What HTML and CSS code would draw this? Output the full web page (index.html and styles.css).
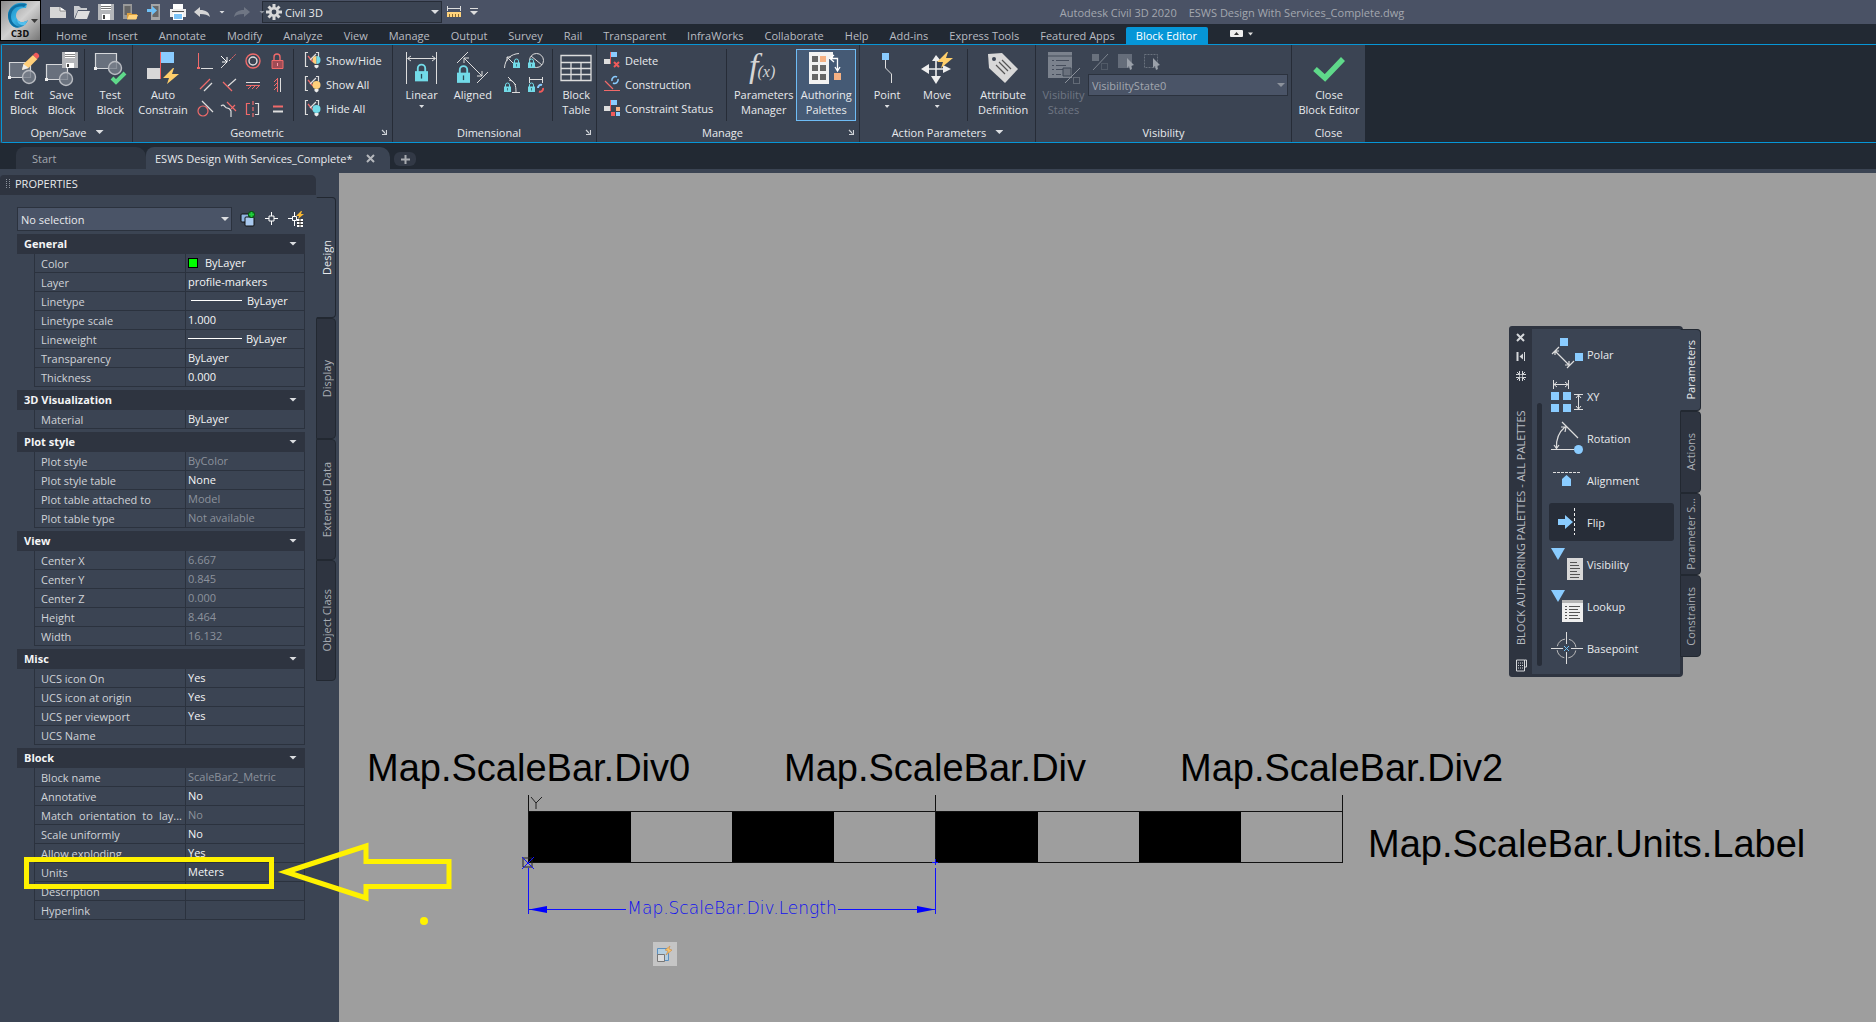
FILE: index.html
```html
<!DOCTYPE html>
<html lang="en">
<head>
<meta charset="utf-8">
<title>Autodesk Civil 3D 2020</title>
<link rel="stylesheet" href="styles.css">
</head>
<body>
<svg class="defs" aria-hidden="true">
  <defs>
    <symbol id="lock" viewBox="0 0 14 20"><path d="M3 9V5a4 4 0 0 1 8 0v4" fill="none" stroke="#72dbe8" stroke-width="2"/><path d="M0 8h14v11H0z" fill="#72dbe8"/><path d="M7 11v5" stroke="#2b4a55" stroke-width="1.4"/></symbol>
    <symbol id="constr" viewBox="0 0 18 18"><path d="M4 1.500H1.500v14H4M12 1.500h2.500v5" fill="none" stroke="#ddd" stroke-width="1.200"/><path d="M4 5l5 6" stroke="#f06a6a" stroke-width="1.200"/><path d="M6 9l6-6" stroke="#ddd" stroke-width="1.200"/><path d="M10.500 14h4v2l-2 1.500-2-1.500z" fill="#eee"/></symbol>
    <symbol id="launch" viewBox="0 0 6 6"><path d="M1 1l3.500 3.500M5.500 1v4.500H1" fill="none" stroke="#d0d3d8" stroke-width="1.200"/></symbol>
    <symbol id="bolt" viewBox="0 0 16 16"><path d="M10 0L0 10h6l-2 6L16 6H9l2-6z" fill="#ffcf6b"/></symbol>
    <symbol id="plan" viewBox="0 0 32 32"><path d="M1.500 1.500h21v15h-21z" fill="#68707d" stroke="#d5d7da" stroke-width="1.200"/><circle cx="21" cy="16" r="6.500" fill="#777e8a" fill-opacity=".8" stroke="#b9bcc2" stroke-width="1.400"/><path d="M0 15h3v3H0z" fill="#eee"/></symbol>
  </defs>
</svg>

<header class="app-head">
  <button class="logo" type="button" aria-label="Application menu">
    <svg width="39" height="39" viewBox="0 0 39 39"><defs><linearGradient id="cg" x1="0" x2="1" y2="1"><stop offset="0" stop-color="#1486ba"/><stop offset=".5" stop-color="#37b1e4"/><stop offset="1" stop-color="#1677ac"/></linearGradient></defs><path d="M26 3C16-1 7 6 7 14c0 9 6 15 13 12 3-1 6-4 7-7-4 3-9 3-11-1-3-5 1-12 9-11z" fill="url(#cg)"/><path d="M7 14c1-7 8-13 19-11l-3 3C15 4 10 9 10 16c0 5 4 9 9 10-7 2-12-4-12-12z" fill="#0d6fa3"/><path d="M16 18c2 4 7 4 11 1l-3 5c-4 1-8-1-8-6z" fill="#53c0ee"/><path d="M30 18h7l-3.500 4z" fill="#3a3a3a"/></svg>
    <span>C3D</span>
  </button>
  <div class="title-bar">
    <div class="quick">
      <button type="button" aria-label="New"><svg width="16" height="16"><path d="M0 3h10l6 4v7H0z" fill="#d6d6d6"/><path d="M10 3v4h6" fill="#fff" stroke="#777" stroke-width=".8"/></svg></button>
      <button type="button" aria-label="Open"><svg width="16" height="16"><path d="M0 15V2h5l2 2h6v2H4z" fill="#c9cbcf"/><path d="M4 7h12l-3 8H1z" fill="#dedede"/></svg></button>
      <button type="button" aria-label="Save"><svg width="16" height="16"><path d="M0 0h16v16H0z" fill="#b4b6ba"/><path d="M3 0h10v6H3zM4 10h8v6H4z" fill="#fff"/><path d="M3 2.500h10M3 4.500h10" stroke="#777"/><path d="M5 11h2v4H5z" fill="#444"/></svg></button>
      <button type="button" aria-label="Open from mobile"><svg width="16" height="16"><path d="M1 0h9v15H1z" fill="#9a9a9a"/><path d="M2.500 2h6v9h-6z" fill="#666"/><path d="M5 9h4l1 1h5v5H5z" fill="#d99d3e"/><path d="M7 11h9l-2 4.500H5z" fill="#ffd37c"/></svg></button>
      <button type="button" aria-label="Save to mobile"><svg width="16" height="16"><path d="M5 0h9v16H5z" fill="#a5a5a5"/><path d="M6.500 2h6v11h-6z" fill="#686868"/><path d="M1 5h5V2l5 4.500L6 11V8H1z" fill="#6fc0f5"/></svg></button>
      <button type="button" aria-label="Plot"><svg width="16" height="16"><path d="M3 0h10v5H3z" fill="#fff"/><path d="M0 5h16v8H0z" fill="#eee"/><path d="M2 7.500h12" stroke="#555"/><path d="M3 9h10v7H3z" fill="#fff"/><path d="M4 10h8v5H4z" fill="#7cc4f8"/></svg></button>
      <button type="button" aria-label="Undo"><svg width="16" height="16"><path d="M0 8l6-5v3c6 0 9 2 10 7-2-2-5-3-10-3v3z" fill="#d6d6d6"/></svg></button>
      <i class="caret small"></i>
      <button type="button" aria-label="Redo"><svg width="16" height="16"><path d="M16 8l-6-5v3C4 6 1 8 0 13c2-2 5-3 10-3v3z" fill="#6f7684"/></svg></button>
      <i class="caret small dim"></i>
    </div>
    <button class="workspace" type="button">
      <svg width="16" height="16" viewBox="0 0 16 16"><g stroke="#d8d8d8" stroke-width="3"><path d="M8 0v16M0 8h16M2.500 2.500l11 11M13.500 2.500l-11 11"/></g><circle cx="8" cy="8" r="5" fill="#d8d8d8"/><circle cx="8" cy="8" r="2.400" fill="#3b4453"/></svg>
      <span>Civil 3D</span><i class="caret"></i>
    </button>
    <svg class="ruler" width="14" height="12"><path d="M.5 0v5M13.500 0v5M1 2.500h12" stroke="#ddd"/><path d="M0 6h14v5H0z" fill="#ffd37c"/><path d="M2.500 8v3M5.500 8v3M8.500 8v3M11.500 8v3" stroke="#8a6a30"/></svg>
    <svg class="more" width="8" height="8"><path d="M0 .5h8" stroke="#ddd"/><path d="M0 3h8L4 7z" fill="#ddd"/></svg>
    <div class="app-title"><span>Autodesk Civil 3D 2020</span><span>ESWS Design With Services_Complete.dwg</span></div>
  </div>
  <nav class="tabs">
    <a href="#">Home</a><a href="#">Insert</a><a href="#">Annotate</a><a href="#">Modify</a><a href="#">Analyze</a><a href="#">View</a><a href="#">Manage</a><a href="#">Output</a><a href="#">Survey</a><a href="#">Rail</a><a href="#">Transparent</a><a href="#">InfraWorks</a><a href="#">Collaborate</a><a href="#">Help</a><a href="#">Add-ins</a><a href="#">Express Tools</a><a href="#">Featured Apps</a><a class="active" href="#">Block Editor</a>
    <button class="minimize" type="button" aria-label="Minimize ribbon"><svg width="24" height="8"><rect width="13" height="7" rx="1" fill="#eee"/><path d="M4 5l2.500-3L9 5z" fill="#333"/><path d="M18 2.500h5L20.500 5.500z" fill="#ddd"/></svg></button>
  </nav>
</header>

<div class="ribbon">
  <section class="panel p-open">
    <div class="tools">
      <button class="big w38" type="button"><svg width="32" height="32"><use href="#plan" y="9" width="32" height="32"/><path d="M14 18l1.500-6L25 3l4.500 4-9 9z" fill="#ffcf7a"/><path d="M14 18l1.500-6 5 4z" fill="#eee"/><path d="M25 3l2-2c2-1 5 2 4 4l-2 2z" fill="#f05a5a"/></svg><span>Edit<br>Block</span></button>
      <button class="big w38" type="button"><svg width="34" height="32"><use href="#plan" y="11" width="32" height="32"/><path d="M17 0h16v16H17z" fill="#b4b6ba"/><path d="M20 0h10v6H20zM21 11h8v5h-8z" fill="#fff"/><path d="M20 2.500h10M20 4.500h10" stroke="#888"/><path d="M22 12h2v3h-2z" fill="#444"/></svg><span>Save<br>Block</span></button>
      <i class="sep"></i>
      <button class="big w38" type="button"><svg width="32" height="32"><use href="#plan" width="32" height="32"/><path d="M18 26l4 4 9-9" fill="none" stroke="#5fd98a" stroke-width="4"/></svg><span>Test<br>Block</span></button>
    </div>
    <button class="panel-title" type="button">Open/Save <i class="caret"></i></button>
  </section>

  <section class="panel p-geo">
    <div class="tools">
      <button class="big w54" type="button"><svg width="32" height="32"><path d="M14 0h13v11H14z" fill="#8accff"/><path d="M0 16h13v11H0z" fill="#d8d8d8"/><path d="M13.500 0v27" stroke="#f05a5a"/><use href="#bolt" x="16" y="16" width="16" height="16"/></svg><span>Auto<br>Constrain</span></button>
      <div class="grid4">
        <button type="button" aria-label="Coincident"><svg width="16" height="16"><path d="M1.500 0v14" stroke="#f06a6a"/><path d="M0 14h3v2H0z" fill="#f06a6a"/><path d="M4 15.500h12" stroke="#ddd"/></svg></button>
        <button type="button" aria-label="Collinear"><svg width="16" height="16"><path d="M0 15L6 9M8 8l2-2" stroke="#ddd"/><path d="M9 7l6-6" stroke="#f06a6a" stroke-dasharray="2 1"/><path d="M0 3l6 6M6 4v5H1" fill="none" stroke="#fff"/></svg></button>
        <button type="button" aria-label="Concentric"><svg width="16" height="16"><circle cx="8" cy="8" r="7" fill="none" stroke="#f06a6a" stroke-width="1.400"/><circle cx="8" cy="8" r="4" fill="none" stroke="#ddd" stroke-width="1.400"/></svg></button>
        <button type="button" aria-label="Fix"><svg width="16" height="16"><path d="M5 8V4a3 3 0 0 1 6 0v4" fill="none" stroke="#f06a6a" stroke-width="1.400"/><path d="M3 7.500h11v8H3z" fill="#a04c55" stroke="#f06a6a"/><path d="M8.500 10v3" stroke="#f9a"/></svg></button>
        <button type="button" aria-label="Parallel"><svg width="16" height="16"><path d="M3 12L13 2" stroke="#f06a6a" stroke-width="1.200"/><path d="M7 14l8-8" stroke="#ddd" stroke-width="1.200"/></svg></button>
        <button type="button" aria-label="Perpendicular"><svg width="16" height="16"><path d="M2 5l9 9" stroke="#f06a6a" stroke-width="1.200"/><path d="M7 9l8-7" stroke="#ddd" stroke-width="1.200"/></svg></button>
        <button type="button" aria-label="Horizontal"><svg width="16" height="16"><path d="M1 5.500h14" stroke="#ddd"/><path d="M1 8.500h14M3 12l3-3M7 12l3-3M11 12l3-3" stroke="#f06a6a"/></svg></button>
        <button type="button" aria-label="Vertical"><svg width="16" height="16"><path d="M11.500 1v14" stroke="#ddd"/><path d="M8.500 1v14M5 5l3-3M5 9l3-3M5 13l3-3" stroke="#f06a6a"/></svg></button>
        <button type="button" aria-label="Tangent"><svg width="16" height="16"><circle cx="6" cy="10" r="5" fill="none" stroke="#f06a6a" stroke-width="1.200"/><path d="M5 0l11 11" stroke="#ddd" stroke-width="1.200"/></svg></button>
        <button type="button" aria-label="Smooth"><svg width="16" height="16"><path d="M0 5c3-3 4 2 6 2s3 1 4 3v6" fill="none" stroke="#ddd" stroke-width="1.200"/><path d="M6 1l9 9M10 8l4-4" stroke="#f06a6a" stroke-width="1.200"/></svg></button>
        <button type="button" aria-label="Symmetric"><svg width="16" height="16"><path d="M5 2.500H1.500v11H5M8 0v4M8 6v4M8 12v4" fill="none" stroke="#f06a6a" stroke-width="1.200"/><path d="M10 2.500h3.500v11H10" fill="none" stroke="#ddd" stroke-width="1.200"/></svg></button>
        <button type="button" aria-label="Equal"><svg width="16" height="16"><path d="M4 5.500h10" stroke="#f06a6a" stroke-width="2"/><path d="M4 10.500h10" stroke="#ddd" stroke-width="2"/></svg></button>
      </div>
      <i class="sep"></i>
      <div class="list">
        <button type="button"><svg width="18" height="18"><use href="#constr" width="18" height="18"/><path d="M12.500 5a4 4 0 0 0 0 8z" fill="#ffcf7a"/><path d="M12.500 5a4 4 0 0 1 0 8z" fill="#72dbe8"/></svg>Show/Hide</button>
        <button type="button"><svg width="18" height="18"><use href="#constr" width="18" height="18"/><circle cx="12.500" cy="10" r="4" fill="#ffcf7a"/></svg>Show All</button>
        <button type="button"><svg width="18" height="18"><use href="#constr" width="18" height="18"/><circle cx="12.500" cy="10" r="4" fill="#72dbe8"/></svg>Hide All</button>
      </div>
    </div>
    <div class="panel-title launch">Geometric<button type="button" aria-label="Constraint settings"><svg width="6" height="6"><use href="#launch"/></svg></button></div>
  </section>

  <section class="panel p-dim">
    <div class="tools">
      <button class="big w50" type="button"><svg width="32" height="32"><path d="M.5 0v32M30.500 0v32M2 6.500h27M5 4L1.500 6.500 5 9M26 4l3.500 2.500L26 9" fill="none" stroke="#ddd"/><use href="#lock" x="9" y="11" width="13" height="20"/></svg><span>Linear</span><i class="caret tiny"></i></button>
      <button class="big w50" type="button"><svg width="32" height="32"><path d="M0 11L11 0M20 31l11-11M7 6l18 18M7 11V6h5M25 19v5h-5" fill="none" stroke="#ddd"/><use href="#lock" x="0" y="13" width="13" height="19"/></svg><span>Aligned</span></button>
      <div class="grid2">
        <button type="button" aria-label="Radius"><svg width="16" height="16"><path d="M.5 15C1 6 7 1 15 .5M3 4l7 7M3 8V4h4" fill="none" stroke="#ddd"/><use href="#lock" x="9" y="5" width="7" height="11"/></svg></button>
        <button type="button" aria-label="Diameter"><svg width="16" height="16"><circle cx="8.500" cy="7.500" r="7" fill="none" stroke="#ddd"/><path d="M3 3l11 9" stroke="#ddd"/><use href="#lock" x="0" y="5" width="7" height="11"/></svg></button>
        <button type="button" aria-label="Angular"><svg width="16" height="16"><path d="M5 3c6 1 7 6 7 12M8 15.500h8M4 0l8 8" fill="none" stroke="#ddd"/><use href="#lock" x="0" y="5" width="7" height="11"/></svg></button>
        <button type="button" aria-label="Convert"><svg width="16" height="16"><path d="M1.500 0v6M14.500 0v6M2 2.500h12" stroke="#ddd"/><use href="#lock" x="0" y="5" width="7" height="11"/><path d="M10 11a3 3 0 0 1 4-3" fill="none" stroke="#8accff" stroke-width="2"/><path d="M11 14.500a3 3 0 0 0 4-3.500" fill="none" stroke="#f05a5a" stroke-width="2"/></svg></button>
      </div>
      <i class="sep"></i>
      <button class="big w40" type="button"><svg width="32" height="32"><path d="M1 3.500h30v25H1zM1 10.500h30M1 16.500h30M1 22.500h30M11 10v18M21 10v18" fill="none" stroke="#ddd" stroke-width="1.300"/></svg><span>Block<br>Table</span></button>
    </div>
    <div class="panel-title launch">Dimensional<button type="button" aria-label="Dimensional settings"><svg width="6" height="6"><use href="#launch"/></svg></button></div>
  </section>

  <section class="panel p-manage">
    <div class="tools">
      <div class="list wide">
        <button type="button"><svg width="16" height="18"><path d="M7 1h6v5H7z" fill="#8accff"/><path d="M0 8h6v5H0z" fill="#ddd"/><path d="M6.500 1v12" stroke="#f05a5a"/><path d="M10 11l5 5M15 11l-5 5" stroke="#f05a5a" stroke-width="2"/></svg>Delete</button>
        <button type="button"><svg width="16" height="18"><path d="M0 15.500h16M1 6l8 8" stroke="#f06a6a" stroke-width="1.200"/><path d="M8 6a3.500 3.500 0 0 1 5-4" fill="none" stroke="#8accff" stroke-width="1.600"/><path d="M9 8a3.500 3.500 0 0 0 5-4" fill="none" stroke="#8accff" stroke-width="1.600"/></svg>Construction</button>
        <button type="button"><svg width="16" height="18"><path d="M7 1h6v5H7zM12 13h4v4h-4z" fill="#8accff"/><path d="M0 7h6v5H0z" fill="#ddd"/><path d="M6.500 1v11" stroke="#f05a5a"/><path d="M7 13h4v4H7z" fill="#f05a5a"/><path d="M12 8h4v4h-4z" fill="#f5b183"/></svg>Constraint Status</button>
      </div>
      <i class="sep"></i>
      <button class="big w66" type="button"><svg width="34" height="32"><text class="fx" x="2" y="25">f<tspan class="fx-arg" dx="-1">(x)</tspan></text></svg><span>Parameters<br>Manager</span></button>
      <button class="big w60 on" type="button"><svg width="34" height="32"><path d="M0 0h24v7h-4v25H0z" fill="#f2f2f2"/><path d="M3 4h6v6H3zM3 13h6v6H3zM11 13h6v6h-6zM3 22h6v6H3zM11 22h6v6h-6z" fill="#666"/><path d="M11 4h6v6h-6zM25 21h7v7h-7z" fill="#f5b183"/><path d="M22 6.500h6.500V18M26 15l2.500 4 2.500-4M25 3l-4 3.500 4 3.500" fill="none" stroke="#fff" stroke-width="1.300"/></svg><span>Authoring<br>Palettes</span></button>
    </div>
    <div class="panel-title launch">Manage<button type="button" aria-label="Block editor settings"><svg width="6" height="6"><use href="#launch"/></svg></button></div>
  </section>

  <section class="panel p-action">
    <div class="tools">
      <button class="big w50" type="button"><svg width="32" height="32"><path d="M11 1h7v7h-7z" fill="#8accff"/><path d="M14.500 8v8l6 6v9" fill="none" stroke="#ddd"/></svg><span>Point</span><i class="caret tiny"></i></button>
      <button class="big w50" type="button"><svg width="32" height="32"><path d="M15 5v24M3 17h24" stroke="#eee" stroke-width="1.600"/><path d="M0 17l8-5v10zM15 32l-5-8h10zM15 3l5 6H11zM30 17l-8-4v8z" fill="#eee"/><use href="#bolt" x="16" y="0" width="16" height="16"/></svg><span>Move</span><i class="caret tiny"></i></button>
      <i class="sep"></i>
      <button class="big w60" type="button"><svg width="32" height="32"><path d="M1 2l14-1 16 16-13 14L2 16z" fill="#d8d8d8"/><circle cx="7" cy="7" r="2" fill="#3b4453"/><path d="M9 13l9 9M12 10l9 9M15 8l9 9" stroke="#555" stroke-width="1.200"/></svg><span>Attribute<br>Definition</span></button>
    </div>
    <button class="panel-title" type="button">Action Parameters <i class="caret"></i></button>
  </section>

  <section class="panel p-vis">
    <div class="tools">
      <button class="big w50" type="button" disabled><svg width="32" height="32"><path d="M0 0h24v26H0z" fill="#7b828d"/><path d="M0 4h24M4 8.500h2M8 8.500h13M4 13.500h2M8 13.500h10M4 17.500h2M8 17.500h8M4 22.500h2M8 22.500h5" stroke="#454d5b" stroke-width="1.200"/><path d="M15 16h8v8h-8z" fill="#6a717d" stroke="#3b4453"/><path d="M17 31l15-15" stroke="#8b919b"/><path d="M25.500 25.500h6v6h-6z" fill="none" stroke="#8b919b" stroke-dasharray="1 1"/></svg><span>Visibility<br>States</span></button>
      <div class="vis-side">
        <div class="vis-icons">
          <button type="button" disabled aria-label="Visibility mode"><svg width="16" height="16"><path d="M0 0h7v7H0z" fill="#69717d"/><path d="M1 16L16 0" stroke="#7d848f"/><path d="M9.500 9.500h6v6h-6z" fill="none" stroke="#69717d" stroke-dasharray="1 1"/></svg></button>
          <button type="button" disabled aria-label="Make visible"><svg width="16" height="16"><path d="M0 0h14v14H0z" fill="#656d7a"/><path d="M9 4l7 7-3 1 1 3-2 1-1-4-2 2z" fill="#9aa0a9"/></svg></button>
          <button type="button" disabled aria-label="Make invisible"><svg width="16" height="16"><path d="M.5.5h13v13H.5z" fill="none" stroke="#69717d" stroke-dasharray="2 1"/><path d="M9 4l7 7-3 1 1 3-2 1-1-4-2 2z" fill="#9aa0a9"/></svg></button>
        </div>
        <div class="select-wrap"><select aria-label="Visibility state" disabled><option>VisibilityState0</option></select><i class="caret dim"></i></div>
      </div>
    </div>
    <div class="panel-title">Visibility</div>
  </section>

  <section class="panel p-close">
    <div class="tools">
      <button class="big w66" type="button"><svg width="32" height="32"><path d="M2 17l10 9L30 7" fill="none" stroke="#5fd98a" stroke-width="5.500"/></svg><span>Close<br>Block Editor</span></button>
    </div>
    <div class="panel-title">Close</div>
  </section>
</div>

<nav class="doc-tabs">
  <a class="doc-tab start" href="#"><span>Start</span></a>
  <a class="doc-tab current" href="#"><span>ESWS Design With Services_Complete*</span><svg width="9" height="9"><path d="M1 1l7 7M8 1L1 8" stroke="#b5b8bd" stroke-width="2"/></svg></a>
  <button class="doc-add" type="button" aria-label="New drawing"><svg width="9" height="9"><path d="M4.500 0v9M0 4.500h9" stroke="#a8abb0" stroke-width="2"/></svg></button>
</nav>

<main class="work">
  <aside class="props">
    <div class="props-head"><svg width="4" height="10"><path d="M.5 0v10M3.500 0v10" stroke="#8c929c" stroke-dasharray="1 1"/></svg>PROPERTIES</div>
    <div class="props-cols">
      <div class="props-body">
        <div class="picker">
          <div class="select-wrap"><select aria-label="Selection"><option>No selection</option></select><i class="caret"></i></div>
          <button type="button" aria-label="Toggle pickadd"><svg width="16" height="16"><rect x="1" y="3" width="8" height="8" rx="1" fill="#8fb4e0" stroke="#111"/><rect x="5" y="6" width="9" height="9" rx="1" fill="#a9c9ef" stroke="#111"/><path d="M11.500 0v7M8 3.500h7" stroke="#0b5b16" stroke-width="4"/><path d="M11.500 1v5M9 3.500h5" stroke="#1fd03c" stroke-width="2"/></svg></button>
          <button type="button" aria-label="Select objects"><svg width="16" height="16"><path d="M7.500 1v4M7.500 10v4M1 7.500h4M10 7.500h4" stroke="#fff"/><path d="M5 5h5v5H5z" fill="none" stroke="#fff"/></svg></button>
          <button type="button" aria-label="Quick select"><svg width="16" height="16"><path d="M6.500 1v4M6.500 10v5M0 7.500h4M4.500 5.500h4v4h-4z" fill="none" stroke="#fff"/><path d="M13 0L8 5h3l-1 3 6-5h-3l1-3z" fill="#f7b731"/><path d="M9 8h6v8H9z" fill="#fff"/><path d="M9 10.500h6M9 13.500h6M12 8v8" stroke="#333"/></svg></button>
        </div>
        <section><button class="cat" type="button">General<i class="caret"></i></button>
          <table>
            <tr><th>Color</th><td><i class="swatch"></i>ByLayer</td></tr>
            <tr><th>Layer</th><td>profile-markers</td></tr>
            <tr><th>Linetype</th><td><i class="line short"></i>ByLayer</td></tr>
            <tr><th>Linetype scale</th><td>1.000</td></tr>
            <tr><th>Lineweight</th><td><i class="line"></i>ByLayer</td></tr>
            <tr><th>Transparency</th><td>ByLayer</td></tr>
            <tr><th>Thickness</th><td>0.000</td></tr>
          </table></section>
        <section><button class="cat" type="button">3D Visualization<i class="caret"></i></button>
          <table><tr><th>Material</th><td>ByLayer</td></tr></table></section>
        <section><button class="cat" type="button">Plot style<i class="caret"></i></button>
          <table>
            <tr><th>Plot style</th><td class="ro">ByColor</td></tr>
            <tr><th>Plot style table</th><td>None</td></tr>
            <tr><th>Plot table attached to</th><td class="ro">Model</td></tr>
            <tr><th>Plot table type</th><td class="ro">Not available</td></tr>
          </table></section>
        <section><button class="cat" type="button">View<i class="caret"></i></button>
          <table>
            <tr><th>Center X</th><td class="ro">6.667</td></tr>
            <tr><th>Center Y</th><td class="ro">0.845</td></tr>
            <tr><th>Center Z</th><td class="ro">0.000</td></tr>
            <tr><th>Height</th><td class="ro">8.464</td></tr>
            <tr><th>Width</th><td class="ro">16.132</td></tr>
          </table></section>
        <section><button class="cat" type="button">Misc<i class="caret"></i></button>
          <table>
            <tr><th>UCS icon On</th><td>Yes</td></tr>
            <tr><th>UCS icon at origin</th><td>Yes</td></tr>
            <tr><th>UCS per viewport</th><td>Yes</td></tr>
            <tr><th>UCS Name</th><td></td></tr>
          </table></section>
        <section><button class="cat" type="button">Block<i class="caret"></i></button>
          <table>
            <tr><th>Block name</th><td class="ro">ScaleBar2_Metric</td></tr>
            <tr><th>Annotative</th><td>No</td></tr>
            <tr><th class="justified">Match orientation to lay...</th><td class="ro">No</td></tr>
            <tr><th>Scale uniformly</th><td>No</td></tr>
            <tr><th>Allow exploding</th><td>Yes</td></tr>
            <tr><th>Units</th><td>Meters</td></tr>
            <tr><th>Description</th><td></td></tr>
            <tr><th>Hyperlink</th><td></td></tr>
          </table></section>
      </div>
      <div class="side-tabs">
        <button class="active" type="button"><span>Design</span></button>
        <button type="button"><span>Display</span></button>
        <button type="button"><span>Extended Data</span></button>
        <button type="button"><span>Object Class</span></button>
      </div>
    </div>
  </aside>

  <div class="canvas">
    <svg class="drawing" width="1500" height="840">
      <g class="map-text">
        <text x="28" y="608">Map.ScaleBar.Div0</text>
        <text x="445" y="608">Map.ScaleBar.Div</text>
        <text x="841" y="608">Map.ScaleBar.Div2</text>
        <text x="1029" y="684">Map.ScaleBar.Units.Label</text>
      </g>
      <g shape-rendering="crispEdges">
        <path d="M189.500 622v68M596.500 622v68M1003.500 622v68M189 638.500h815M189 689.500h815" stroke="#111" fill="none"/>
        <path d="M190 639h102v50H190zM393 639h102v50H393zM597 639h102v50H597zM800 639h102v50H800z"/>
      </g>
      <path d="M192 624l5 6 6-6M197 630v6M184 685h9v9h-9z" fill="none" stroke="#222"/>
      <path d="M183 684l12 12M195 684l-12 12M593 689.500h6M596.500 686v6" stroke="#1010ff"/>
      <path d="M189.500 695v46M596.500 695v46M189 736.500h98M499 736.500h97" stroke="#1010ff"/>
      <path d="M190 736.500l18-3.500v7zM596 736.500l-18-3.500v7z" fill="#00f"/>
      <text class="dim-text" x="393" y="741">Map.ScaleBar.Div.Length</text>
      <path d="M314 769h24v24h-24z" fill="#c5c5c5"/>
      <path d="M318.500 775.500h11v12h-11z" fill="#b5cfe0" stroke="#5a8fc0"/><path d="M318.500 781.500h7v7h-7z" fill="#ddd" stroke="#777"/>
      <path d="M331 773l-5 4 3 1-2 4 6-5-3-1z" fill="#f5c36a" stroke="#c98a4a" stroke-width=".6"/>
    </svg>

    <section class="palette">
      <div class="pal-bar">
        <button type="button" aria-label="Close"><svg width="9" height="9"><path d="M1 1l7 7M8 1L1 8" stroke="#d5d7da" stroke-width="2"/></svg></button>
        <button type="button" aria-label="Auto-hide"><svg width="9" height="9"><path d="M1.500 0v9" stroke="#d5d7da" stroke-width="2"/><path d="M8.500 0v9" stroke="#d5d7da"/><path d="M7 1.500v6L3.500 4.500z" fill="#d5d7da"/></svg></button>
        <button type="button" aria-label="Properties"><svg width="10" height="10"><path d="M3.500 0v10M6.500 0v10M0 3.500h10M0 6.500h10M1 1l8 8M9 1L1 9" stroke="#d5d7da"/><circle cx="5" cy="5" r="1.500" fill="#2e3440"/></svg></button>
        <span class="pal-name">BLOCK AUTHORING PALETTES - ALL PALETTES</span>
        <svg width="12" height="13"><path d="M1.500 1h8v11h-8zM9.500 1h2v7h-2" fill="none" stroke="#d5d7da"/><path d="M3 4h5M3 6.500h5M3 9h5" stroke="#d5d7da" stroke-dasharray="1 1"/></svg>
      </div>
      <div class="pal-body">
        <i class="pal-scroll"></i>
        <div class="pal-list">
          <button type="button"><svg width="32" height="32"><path d="M9 0h8v8H9zM24 15h8v8h-8z" fill="#8accff"/><path d="M1 16l7-7M16 30l7-7M4 13l14 14M4 17v-4h4M18 23v4h-4" fill="none" stroke="#ddd" stroke-width="1.200"/></svg>Polar</button>
          <button type="button"><svg width="32" height="32"><path d="M0 12h8v8H0zM12 12h8v8h-8zM0 24h8v8H0zM12 24h8v8h-8z" fill="#8accff"/><path d="M2.500 0v9M17.500 0v9M3 4.500h14M6 2L3 4.500 6 7M14 2l3 2.500L14 7M23 14.500h9M23 29.500h9M27.500 15v14M25 18l2.500-3 2.500 3M25 26l2.500 3 2.500-3" fill="none" stroke="#ddd"/></svg>XY</button>
          <button type="button"><svg width="32" height="32"><path d="M0 27.500h23M11 0l16 16M5.500 26C5 17 8 10 14 5M3 23l2.500 3.500L8 23M10 5h5l-1 5" fill="none" stroke="#ddd" stroke-width="1.200"/><circle cx="27.500" cy="27.500" r="4.500" fill="#8accff"/></svg>Rotation</button>
          <button type="button"><svg width="32" height="32"><path d="M2 8.500h28" stroke="#ddd" stroke-dasharray="3 1"/><path d="M11 22v-7l4.500-4 4.500 4v7z" fill="#8accff"/></svg>Alignment</button>
          <button class="on" type="button"><svg width="32" height="32"><path d="M7 13h7V9l8 7-8 7v-4H7z" fill="#8accff"/><path d="M23.500 2v27" stroke="#eee" stroke-dasharray="3 2"/></svg>Flip</button>
          <button type="button"><svg width="32" height="32"><path d="M0 0h14L7 12z" fill="#8accff"/><path d="M16 10h16v22H16z" fill="#d8d8d8"/><path d="M19 14.500h7M19 17.500h9M19 20.500h10M19 23.500h7M19 26.500h10M19 29.500h9" stroke="#555"/></svg>Visibility</button>
          <button type="button"><svg width="32" height="32"><path d="M0 0h14L7 12z" fill="#8accff"/><path d="M11 10h21v22H11z" fill="#eee"/><path d="M11 10h21v3H11z" fill="#b5b5b5"/><path d="M14 16.500h2M18 16.500h11M14 19.500h2M18 19.500h9M14 22.500h2M18 22.500h11M14 25.500h2M18 25.500h9M14 28.500h2M18 28.500h11" stroke="#555"/></svg>Lookup</button>
          <button type="button"><svg width="32" height="32"><path d="M15.500 0v12M15.500 20v12M0 16.500h12M20 16.500h12" stroke="#ddd"/><circle cx="15.500" cy="16.500" r="9.500" fill="none" stroke="#bbb" stroke-dasharray="11 4" stroke-dashoffset="-2"/><path d="M13 14l5 5M18 14l-5 5" stroke="#6fc0f5"/></svg>Basepoint</button>
        </div>
      </div>
      <div class="side-tabs">
        <button class="active" type="button"><span>Parameters</span></button>
        <button type="button"><span>Actions</span></button>
        <button type="button"><span>Parameter S...</span></button>
        <button type="button"><span>Constraints</span></button>
      </div>
    </section>
  </div>

  <svg class="markup" width="460" height="110" viewBox="0 0 460 110"><g fill="none" stroke="#fff200" stroke-width="5"><path d="M26.500 32.500h245v27h-245z"/><path d="M286 45l80-26v15.500h83v25h-83V71z"/></g><circle cx="424" cy="94" r="4" fill="#fff200"/></svg>
</main>
</body>
</html>
```
FILE: styles.css
```css
* { box-sizing: border-box; }
html, body { height: 100%; }
body {
  margin: 0;
  display: flex;
  flex-direction: column;
  background: #3b4453;
  color: #e8eaed;
  font: 11px/15px "Open Sans", "Noto Sans", sans-serif;
  overflow: hidden;
}
button, select { font: inherit; color: inherit; background: none; border: 0; padding: 0; margin: 0; }
a { color: inherit; text-decoration: none; }
svg { display: block; flex: none; overflow: visible; }
.defs { position: absolute; width: 0; height: 0; overflow: hidden; }

.caret { width: 8px; height: 4px; background: #dcdee1; clip-path: polygon(0 0, 100% 0, 50% 100%); flex: none; display: inline-block; }
.caret.small { width: 6px; height: 3px; }
.caret.tiny { width: 5px; height: 3px; }
.caret.dim { background: #8c929c; }

/* title bar and ribbon tabs */
.app-head { position: relative; flex: none; }
.logo { position: absolute; left: 0; top: 0; width: 41px; height: 41px; border: 1px solid #000; background: linear-gradient(135deg, #8a8a8a, #d0d0d0 50%, #777); z-index: 1; }
.logo svg { position: absolute; left: 0; top: 0; }
.logo span { position: absolute; left: 0; bottom: 0; width: 38px; font: bold 8px/10px "DejaVu Sans", sans-serif; color: #111; text-align: center; }
.title-bar { display: flex; align-items: center; height: 24px; padding-left: 50px; background: #4a5265; }
.quick { display: flex; align-items: center; gap: 8px; width: 212px; }
.quick .caret { margin: 0 1px; }
.workspace { display: flex; align-items: center; gap: 3px; width: 180px; height: 22px; padding: 0 2px 0 3px; background: #3b4453; border: 1px solid #262c37; }
.workspace span { flex: 1; text-align: left; }
.ruler { margin-left: 5px; }
.more { margin-left: 9px; }
.app-title { flex: 1; display: flex; justify-content: center; gap: 12px; padding-left: 110px; color: #a3a7af; }
.tabs { display: flex; align-items: flex-end; height: 20px; padding-left: 46px; background: #222933; color: #b9bcc2; }
.tabs a { padding: 0 11px 0 10px; line-height: 17px; }
.tabs a.active { background: #0696d7; color: #fff; border-radius: 2px 2px 0 0; }
.minimize { margin: 0 0 6px 22px; }

/* ribbon */
.ribbon { display: flex; flex: none; height: 99px; border: 1px solid #0696d7; margin-left: 1px; border-right: 0; border-radius: 2px 0 0 2px; background: #222933; }
.panel { display: flex; flex-direction: column; background: #3b4453; border-right: 1px solid #262c37; }
.p-open { width: 131px; }
.p-geo { width: 260px; }
.p-dim { width: 204px; }
.p-manage { width: 263px; }
.p-action { width: 176px; }
.p-vis { width: 256px; }
.p-close { width: 73px; border-right: 0; }
.tools { flex: 1; display: flex; align-items: flex-start; padding: 4px 3px 0; }
.panel-title { display: flex; align-items: center; justify-content: center; gap: 9px; height: 20px; width: 100%; }
.launch button { margin-left: auto; }
.launch { justify-content: flex-start; padding-right: 5px; }
.launch::before { content: ""; margin-right: auto; }
.big { display: flex; flex-direction: column; align-items: center; height: 72px; padding-top: 2px; border: 1px solid transparent; white-space: nowrap; }
.big svg { margin-bottom: 3px; }
.big span { display: block; text-align: center; }
.big .caret { margin-top: 3px; }
.big:disabled { color: #6f7683; }
.big.on { background: #455a75; border-color: #6ebcf5; }
.w38 { width: 38px; } .w40 { width: 40px; } .w50 { width: 50px; }
.w54 { width: 54px; } .w60 { width: 60px; } .w66 { width: 66px; }
.sep { width: 1px; height: 72px; background: #262c37; margin: 0 4px; flex: none; }
.p-open .sep { margin-right: 6px; }
.grid4, .grid2 { display: grid; grid-auto-rows: 24px; grid-template-columns: repeat(4, 24px); padding-left: 3px; }
.grid2 { grid-template-columns: repeat(2, 24px); padding: 0; }
.grid4 button, .grid2 button { display: grid; place-items: center; }
.list { display: flex; flex-direction: column; padding-left: 6px; }
.list button { display: flex; align-items: center; gap: 4px; height: 24px; padding-bottom: 2px; white-space: nowrap; }
.list.wide { width: 123px; padding-left: 4px; }
.list.wide button { gap: 5px; }
.p-dim .tools { padding: 4px 0 0 4px; gap: 2px; }
.p-dim .sep { margin: 0 2px; }
.p-action .tools { gap: 2px; }
.p-vis .tools { padding-left: 3px; }
.p-close .tools { padding-left: 4px; }
.fx { font: italic 34px "Liberation Serif", serif; fill: #d5d5d5; }
.fx-arg { font-size: 16px; }
.vis-icons { display: flex; gap: 10px; padding: 4px; height: 25px; }
.select-wrap { position: relative; width: 200px; height: 22px; }
.select-wrap select { appearance: none; width: 100%; height: 100%; padding: 0 3px; background: #4a5467; border: 1px solid #2b323e; opacity: 1; }
.select-wrap select:disabled { color: #a3a7af; }
.select-wrap .caret { position: absolute; right: 3px; top: 50%; margin-top: -2px; }

/* drawing tabs */
.doc-tabs { display: flex; align-items: flex-end; flex: none; height: 26px; padding-left: 16px; background: #222933; white-space: nowrap; }
.doc-tab { display: flex; align-items: center; height: 22px; padding-left: 16px; border-radius: 8px 10px 0 0; background: #2f3642; color: #a3a7af; }
.doc-tab.start { width: 130px; }
.doc-tab.current { width: 244px; padding: 0 15px 0 9px; justify-content: space-between; background: #3b4453; color: #e8eaed; }
.doc-add { display: grid; place-items: center; width: 22px; height: 14px; margin: 0 0 3px 4px; border-radius: 6px; background: #323946; }

/* work area */
.work { position: relative; flex: 1; display: flex; padding-top: 4px; min-height: 0; }
.props { width: 339px; flex: none; }
.props-head { display: flex; align-items: center; gap: 5px; width: 316px; height: 20px; margin-top: 2px; padding: 0 0 3px 6px; border-radius: 4px 5px 0 0; background: #2e3440; }
.props-cols { display: flex; }
.props-body { width: 316px; padding: 12px 11px 0 17px; }
.picker { display: flex; align-items: center; gap: 8px; height: 24px; margin-bottom: 3px; }
.picker .select-wrap { width: 215px; height: 24px; flex: none; }
.picker button { width: 16px; }
.props-body section { margin-bottom: 3px; }
.cat { display: flex; align-items: center; justify-content: space-between; width: 100%; height: 20px; padding: 0 8px 1px 7px; background: #2e3440; font-weight: bold; color: #f4f5f6; }
.props-body table { width: 271px; margin-left: 17px; border-collapse: separate; border-spacing: 0; table-layout: fixed; border-left: 1px solid #2b323e; }
.props-body th, .props-body td { height: 19px; padding: 1px 0 0 6px; border: 0 solid #2b323e; border-width: 0 1px 1px 0; font-weight: normal; text-align: left; white-space: nowrap; line-height: 15px; color: #d0d3d8; }
.props-body th { width: 151px; }
.props-body th.justified { padding-right: 3px; white-space: normal; text-align-last: justify; }
.props-body td { padding: 0 0 1px 2px; color: #f4f5f6; }
.props-body td.ro { color: #8c929c; }
.swatch { display: inline-block; width: 10px; height: 10px; margin-right: 7px; border: 1px solid #000; background: #0f0; vertical-align: -1px; }
.line { display: inline-block; width: 54px; height: 1px; margin-right: 4px; background: #fff; vertical-align: 4px; }
.line.short { width: 51px; margin: 0 5px 0 3px; }

.side-tabs { display: flex; flex-direction: column; width: 20px; }
.side-tabs button { display: grid; place-items: center; height: 121px; background: #2e3440; border: 1px solid #222831; border-radius: 0 4px 4px 0; color: #a9adb4; }
.side-tabs button.active { background: #3b4453; border-left-color: #3b4453; color: #e8eaed; }
.side-tabs span { writing-mode: vertical-rl; transform: rotate(180deg); white-space: nowrap; }
.props .side-tabs { padding-top: 2px; }

.canvas { position: relative; flex: 1; background: #9e9e9e; overflow: hidden; min-width: 0; }
.drawing { position: absolute; left: 0; top: 0; }
.map-text { font: 38px "Liberation Sans", Arial, sans-serif; }
.dim-text { font: 200 17px "DejaVu Sans", sans-serif; fill: #1010f0; text-anchor: middle; }

/* floating block authoring palette */
.palette { position: absolute; left: 1170px; top: 153px; display: flex; height: 351px; }
.pal-bar { display: flex; flex-direction: column; align-items: center; width: 23px; padding: 2px 0 5px; border-radius: 3px 0 0 3px; background: #2e3440; }
.pal-bar button { height: 19px; }
.pal-name { flex: 1; writing-mode: vertical-rl; transform: rotate(180deg); color: #b9bcc2; text-align: left; padding-top: 14px; white-space: nowrap; }
.pal-body { display: flex; width: 151px; padding: 6px 6px 0 5px; border: 3px solid #2e3440; border-width: 3px 3px 3px 0; border-radius: 0 4px 4px 0; background: #3b4453; }
.pal-scroll { width: 5px; height: 263px; margin-top: 68px; border-radius: 3px; background: #272d38; }
.pal-list { display: flex; flex-direction: column; gap: 4px; padding-left: 7px; }
.pal-list button { display: flex; align-items: center; gap: 4px; width: 125px; height: 38px; padding-left: 2px; border-radius: 3px; text-align: left; }
.pal-list .on { background: #272d38; }
.palette .side-tabs { width: 21px; margin-left: -3px; padding-top: 3px; }
.palette .side-tabs button { height: 82px; }

/* highlight drawn over the Units row */
.markup { position: absolute; left: 0; top: 658px; pointer-events: none; }
```
